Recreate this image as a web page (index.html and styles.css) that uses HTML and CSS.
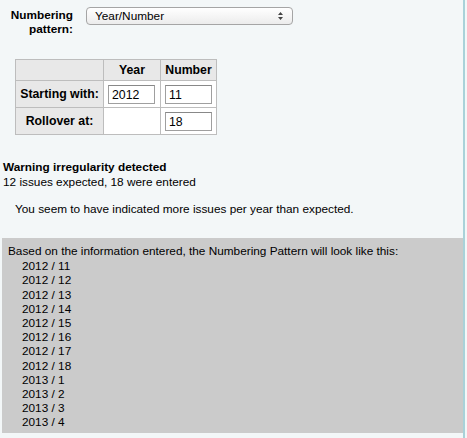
FILE: index.html
```html
<!DOCTYPE html>
<html>
<head>
<meta charset="utf-8">
<link rel="stylesheet" href="styles.css">
</head>
<body>
<div class="page">
  <div class="pattern-row">
    <div class="pattern-label">Numbering<br>pattern:</div>
    <div class="select">
      <span>Year/Number</span>
      <svg width="7" height="10" viewBox="0 0 7 10"><path d="M3.5 1 L6 4 L1 4 Z M3.5 9 L6 6 L1 6 Z" fill="#444"/></svg>
    </div>
  </div>
  <table class="grid">
    <tr class="head">
      <th></th>
      <th>Year</th>
      <th>Number</th>
    </tr>
    <tr>
      <th>Starting with:</th>
      <td><div class="inp">2012</div></td>
      <td><div class="inp">11</div></td>
    </tr>
    <tr>
      <th>Rollover at:</th>
      <td></td>
      <td><div class="inp">18</div></td>
    </tr>
  </table>
  <div class="warning">
    <div class="warn-title">Warning irregularity detected</div>
    <div>12 issues expected, 18 were entered</div>
    <div class="warn-msg">You seem to have indicated more issues per year than expected.</div>
  </div>
  <div class="preview">
    <div>Based on the information entered, the Numbering Pattern will look like this:</div>
    <ul class="list">
      <li>2012 / 11</li>
      <li>2012 / 12</li>
      <li>2012 / 13</li>
      <li>2012 / 14</li>
      <li>2012 / 15</li>
      <li>2012 / 16</li>
      <li>2012 / 17</li>
      <li>2012 / 18</li>
      <li>2013 / 1</li>
      <li>2013 / 2</li>
      <li>2013 / 3</li>
      <li>2013 / 4</li>
    </ul>
  </div>
</div>
</body>
</html>
```
FILE: styles.css
```css
html, body {
  margin: 0;
  padding: 0;
  background: #f3f7f8;
}
body {
  font-family: "Liberation Sans", Arial, sans-serif;
  font-size: 11.8px;
  color: #000;
  width: 467px;
  height: 438px;
  overflow: hidden;
}
.page {
  width: 465px;
  height: 438px;
  border-right: 2px solid #a9d2d9;
  box-sizing: border-box;
  padding: 0 2px 0 2px;
}
.pattern-row {
  display: flex;
  align-items: flex-start;
  padding-top: 7px;
}
.pattern-label {
  width: 71px;
  text-align: right;
  font-weight: bold;
  line-height: 14px;
  padding-top: 1px;
}
.select {
  margin-left: 13px;
  width: 207px;
  height: 18px;
  box-sizing: border-box;
  border: 1px solid #a5a5a5;
  border-radius: 4px;
  background: linear-gradient(#ffffff, #ececec);
  display: flex;
  align-items: center;
  justify-content: space-between;
  padding: 0 8px 0 8px;
  line-height: 16px;
}
.grid {
  margin: 23px 0 0 13px;
  border-collapse: collapse;
  border: 1px solid #bdbdbd;
}
.grid th, .grid td {
  border: 1px solid #bdbdbd;
  padding: 0 4px;
}
.grid th {
  background: #e8e8e8;
  font-weight: bold;
  font-size: 12.3px;
  text-align: center;
}
.grid td {
  background: #ffffff;
}
.grid tr.head th {
  height: 20px;
}
.grid tr.head th:first-child {
  width: 79px;
}
.grid tr:not(.head) th, .grid tr:not(.head) td {
  height: 26px;
}
.grid td:nth-child(2) {
  width: 48px;
}
.grid td:nth-child(3) {
  width: 47px;
}
.inp {
  width: 47px;
  height: 19px;
  box-sizing: border-box;
  border: 1px solid #9f9f9f;
  border-top-color: #888;
  background: #fff;
  padding: 0 3px;
  line-height: 18px;
  font-size: 12.3px;
}
.warning {
  margin-top: 25px;
  line-height: 15px;
  padding-left: 1px;
}
.warn-title {
  font-weight: bold;
}
.warn-msg {
  margin-top: 12px;
  padding-left: 12px;
}
.preview {
  margin-top: 21px;
  background: #cbcbcb;
  width: 461px;
  height: 195px;
  box-sizing: border-box;
  padding: 6px 6px 0 6px;
  line-height: 14.2px;
}
.list {
  list-style: none;
  margin: 1px 0 0 0;
  padding: 0 0 0 14px;
}
```
